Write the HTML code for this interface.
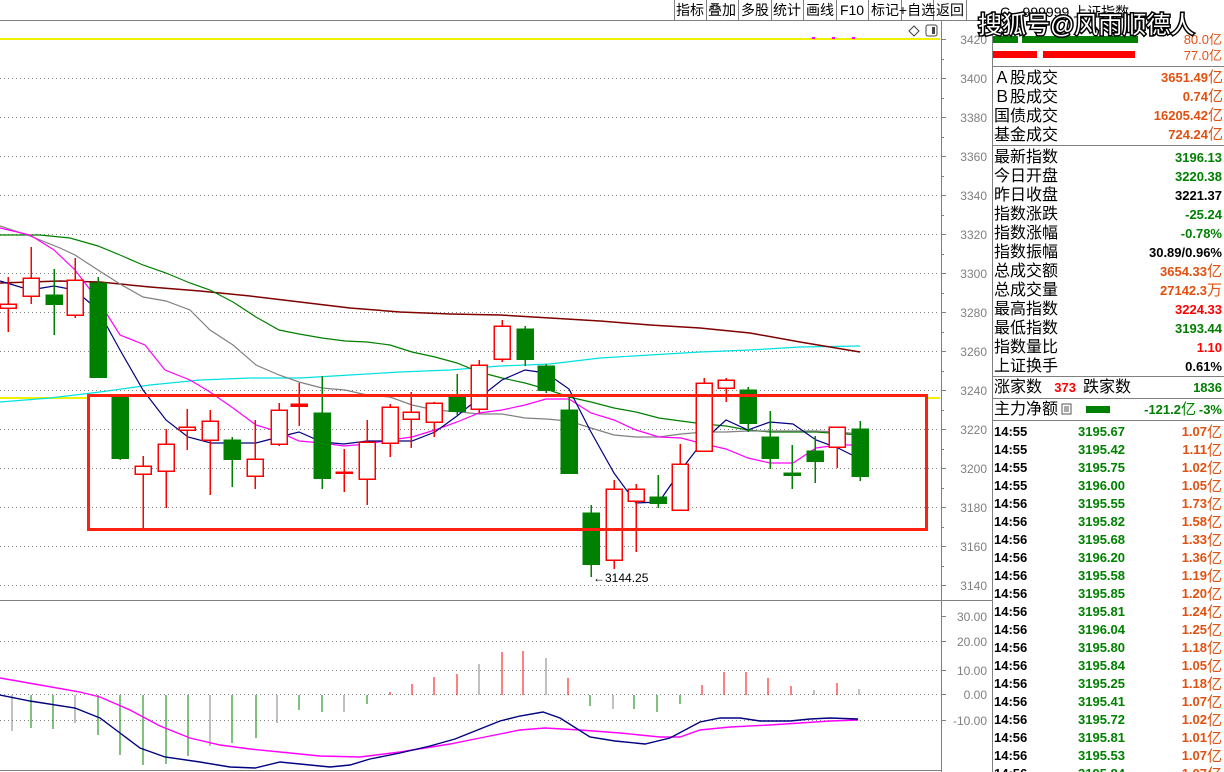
<!DOCTYPE html>
<html><head><meta charset="utf-8"><style>
body{margin:0;width:1224px;height:772px;overflow:hidden;background:#fff;font-family:"Liberation Sans","Noto Sans CJK SC",sans-serif}
svg{display:block}
.t{font-family:"Liberation Sans","Noto Sans CJK SC",sans-serif}
</style></head><body>
<svg width="1224" height="772" xmlns="http://www.w3.org/2000/svg">
<rect width="1224" height="772" fill="#fff"/>
<g stroke="#808080" fill="none" shape-rendering="crispEdges">
<line x1="0" y1="20.5" x2="992" y2="20.5"/>
<line x1="674.5" y1="0" x2="674.5" y2="20"/><line x1="706.5" y1="0" x2="706.5" y2="20"/><line x1="738.5" y1="0" x2="738.5" y2="20"/><line x1="771.5" y1="0" x2="771.5" y2="20"/><line x1="803.5" y1="0" x2="803.5" y2="20"/><line x1="836.5" y1="0" x2="836.5" y2="20"/><line x1="868.5" y1="0" x2="868.5" y2="20"/><line x1="901.5" y1="0" x2="901.5" y2="20"/><line x1="933.5" y1="0" x2="933.5" y2="20"/><line x1="966.5" y1="0" x2="966.5" y2="20"/>
</g>
<g font-size="14" fill="#000" class="t" text-anchor="middle">
<text x="690" y="15">指标</text><text x="722" y="15">叠加</text><text x="755" y="15">多股</text><text x="787" y="15">统计</text><text x="820" y="15">画线</text><text x="852" y="15">F10</text><text x="885" y="15">标记</text><text x="917" y="15">+自选</text><text x="950" y="15">返回</text>
</g>
<g stroke="#808080" stroke-dasharray="1,3" shape-rendering="crispEdges">
<line x1="0" y1="78.5" x2="940" y2="78.5"/><line x1="0" y1="117.5" x2="940" y2="117.5"/><line x1="0" y1="156.5" x2="940" y2="156.5"/><line x1="0" y1="195.5" x2="940" y2="195.5"/><line x1="0" y1="234.5" x2="940" y2="234.5"/><line x1="0" y1="273.5" x2="940" y2="273.5"/><line x1="0" y1="312.5" x2="940" y2="312.5"/><line x1="0" y1="351.5" x2="940" y2="351.5"/><line x1="0" y1="390.5" x2="940" y2="390.5"/><line x1="0" y1="429.5" x2="940" y2="429.5"/><line x1="0" y1="468.5" x2="940" y2="468.5"/><line x1="0" y1="507.5" x2="940" y2="507.5"/><line x1="0" y1="546.5" x2="940" y2="546.5"/><line x1="0" y1="585.5" x2="940" y2="585.5"/>
<line x1="0" y1="641.5" x2="940" y2="641.5"/><line x1="0" y1="670.5" x2="940" y2="670.5"/><line x1="0" y1="694.5" x2="940" y2="694.5"/><line x1="0" y1="720.5" x2="940" y2="720.5"/>
</g>
<line x1="0" y1="39" x2="940" y2="39" stroke="#f0f000" stroke-width="2"/>
<rect x="812" y="37" width="3" height="2" fill="#f0f"/><rect x="832" y="37" width="3" height="2" fill="#f0f"/><rect x="852" y="37" width="3" height="2" fill="#f0f"/>
<path d="M909 31 L914 26 L919 31 L914 36 Z" fill="none" stroke="#444"/>
<rect x="926" y="25" width="11" height="11" rx="2" fill="none" stroke="#444"/><rect x="932" y="27" width="3" height="7" fill="#444"/>
<line x1="0" y1="398" x2="87" y2="398" stroke="#f0f000" stroke-width="2"/>
<line x1="927" y1="398" x2="940" y2="398" stroke="#f0f000" stroke-width="2"/>
<g fill="none" stroke-width="1.2">
<polyline stroke="#00e0e0" points="0,402 50,398 100,392 150,385 200,380 250,378 300,378 350,375 400,372 450,370 500,366 550,364 600,358 650,355 700,352 750,350 800,347 860,346"/>
<polyline stroke="#800000" stroke-width="1.5" points="0,283 60,281 100,282 150,287 200,291 250,296 300,302 350,308 400,312 450,314 500,315 550,318 600,321 650,325 700,328 750,333 800,342 860,352"/>
<polyline stroke="#008000" points="0,235 40,235 70,238 98,246 120,255 143,265 166,273 190,283 210,290 233,302 256,317 279,330 299,334 322,338 345,341 367,342 390,345 412,352 435,357 457,363 479,372 502,378 525,383 546,389 569,397 591,402 614,408 636,412 659,418 681,421 704,424 726,426 748,430 770,432 816,432 860,435"/>
<polyline stroke="#808080" points="0,226 30,236 60,248 75,255 98,270 120,284 143,297 166,301 190,310 210,330 233,345 256,365 279,375 299,382 322,388 345,390 367,395 390,397 412,405 435,410 460,412 479,414 502,414 525,418 546,419 569,421 591,428 614,435 636,437 659,437 681,434 704,432 726,432 748,431 770,431 816,431 838,432 860,434"/>
<polyline stroke="#ff00ff" points="0,228 30,235 54,250 75,270 98,300 120,335 145,345 165,370 190,380 210,392 233,408 256,425 279,432 299,441 322,443 344,446 367,444 390,440 412,437 435,430 457,422 479,413 502,410 525,405 546,399 569,399 591,413 614,420 636,430 659,437 681,438 704,444 726,449 748,458 770,463 793,463 816,448 838,445 860,445"/>
<polyline stroke="#000080" points="0,281 30,290 54,286 75,290 98,310 120,350 143,390 166,420 188,437 211,443 234,443 256,443 279,437 299,432 322,442 344,444 367,441 390,441 412,441 435,432 457,416 479,398 502,380 525,370 546,373 569,389 591,432 614,473 636,503 659,502 681,470 704,440 726,420 748,430 770,422 793,424 816,440 838,448 860,459"/>
</g>
<g shape-rendering="crispEdges" stroke-width="1.5">
<g stroke="#ff0000" fill="#fff">
<line x1="8" y1="277" x2="8" y2="332"/><rect x="0" y="304" width="16" height="4"/>
<line x1="31" y1="247" x2="31" y2="304"/><rect x="23" y="278" width="16" height="18"/>
<line x1="75" y1="258" x2="75" y2="318"/><rect x="67" y="280" width="16" height="35"/>
<line x1="143" y1="456" x2="143" y2="530"/><rect x="135" y="466" width="16" height="8"/>
<line x1="166" y1="429" x2="166" y2="508"/><rect x="158" y="444" width="16" height="27"/>
<line x1="187" y1="409" x2="187" y2="450"/><rect x="179" y="427" width="16" height="3"/>
<line x1="210" y1="410" x2="210" y2="495"/><rect x="202" y="421" width="16" height="19"/>
<line x1="255" y1="420" x2="255" y2="489"/><rect x="247" y="459" width="16" height="17"/>
<line x1="279" y1="403" x2="279" y2="446"/><rect x="271" y="410" width="16" height="34"/>
<line x1="299" y1="383" x2="299" y2="426"/><rect x="291" y="404" width="16" height="2" fill="#f00"/>
<line x1="344" y1="449" x2="344" y2="492"/><rect x="336" y="472" width="16" height="1" fill="#f00"/>
<line x1="367" y1="420" x2="367" y2="505"/><rect x="359" y="442" width="16" height="37"/>
<line x1="390" y1="404" x2="390" y2="457"/><rect x="382" y="407" width="16" height="36"/>
<line x1="411" y1="392" x2="411" y2="448"/><rect x="403" y="412" width="16" height="7"/>
<line x1="434" y1="402" x2="434" y2="437"/><rect x="426" y="403" width="16" height="19"/>
<line x1="479" y1="360" x2="479" y2="413"/><rect x="471" y="365" width="16" height="44"/>
<line x1="502" y1="320" x2="502" y2="362"/><rect x="494" y="326" width="16" height="33"/>
<line x1="614" y1="480" x2="614" y2="569"/><rect x="606" y="489" width="16" height="71"/>
<line x1="636" y1="484" x2="636" y2="552"/><rect x="628" y="489" width="16" height="12"/>
<line x1="680" y1="444" x2="680" y2="510"/><rect x="672" y="464" width="16" height="46"/>
<line x1="704" y1="378" x2="704" y2="451"/><rect x="696" y="383" width="16" height="68"/>
<line x1="726" y1="378" x2="726" y2="402"/><rect x="718" y="380" width="16" height="8"/>
<line x1="837" y1="427" x2="837" y2="468"/><rect x="829" y="427" width="16" height="20"/>
</g>
<g stroke="#008000" fill="#008000">
<line x1="54" y1="269" x2="54" y2="335"/><rect x="46" y="295" width="16" height="9"/>
<line x1="98" y1="277" x2="98" y2="377"/><rect x="90" y="283" width="16" height="94"/>
<line x1="120" y1="397" x2="120" y2="460"/><rect x="112" y="397" width="16" height="61"/>
<line x1="232" y1="437" x2="232" y2="487"/><rect x="224" y="440" width="16" height="19"/>
<line x1="322" y1="376" x2="322" y2="489"/><rect x="314" y="413" width="16" height="65"/>
<line x1="457" y1="374" x2="457" y2="415"/><rect x="449" y="397" width="16" height="14"/>
<line x1="525" y1="326" x2="525" y2="366"/><rect x="517" y="329" width="16" height="30"/>
<line x1="546" y1="364" x2="546" y2="393"/><rect x="538" y="366" width="16" height="24"/>
<line x1="569" y1="397" x2="569" y2="473"/><rect x="561" y="410" width="16" height="63"/>
<line x1="591" y1="505" x2="591" y2="577"/><rect x="583" y="513" width="16" height="51"/>
<line x1="658" y1="475" x2="658" y2="508"/><rect x="650" y="497" width="16" height="6"/>
<line x1="748" y1="387" x2="748" y2="432"/><rect x="740" y="390" width="16" height="33"/>
<line x1="770" y1="411" x2="770" y2="469"/><rect x="762" y="437" width="16" height="21"/>
<line x1="792" y1="445" x2="792" y2="489"/><rect x="784" y="473" width="16" height="2"/>
<line x1="815" y1="436" x2="815" y2="483"/><rect x="807" y="451" width="16" height="10"/>
<line x1="860" y1="421" x2="860" y2="481"/><rect x="852" y="429" width="16" height="47"/>
</g>
</g>
<rect x="88.5" y="395.5" width="838" height="134" fill="none" stroke="#ff2010" stroke-width="3"/>
<text x="593" y="582" font-size="12" class="t" fill="#000">←3144.25</text>
<g stroke="#808080" shape-rendering="crispEdges">
<line x1="941.5" y1="20" x2="941.5" y2="772"/>
<line x1="0" y1="600.5" x2="992" y2="600.5"/>
<line x1="0" y1="770.5" x2="941" y2="770.5"/>
<line x1="992.5" y1="20" x2="992.5" y2="772"/>
</g>
<g stroke="#808080" shape-rendering="crispEdges">
<line x1="941" y1="39.5" x2="946" y2="39.5"/><line x1="941" y1="78.5" x2="946" y2="78.5"/><line x1="941" y1="117.5" x2="946" y2="117.5"/><line x1="941" y1="156.5" x2="946" y2="156.5"/><line x1="941" y1="195.5" x2="946" y2="195.5"/><line x1="941" y1="234.5" x2="946" y2="234.5"/><line x1="941" y1="273.5" x2="946" y2="273.5"/><line x1="941" y1="312.5" x2="946" y2="312.5"/><line x1="941" y1="351.5" x2="946" y2="351.5"/><line x1="941" y1="390.5" x2="946" y2="390.5"/><line x1="941" y1="429.5" x2="946" y2="429.5"/><line x1="941" y1="468.5" x2="946" y2="468.5"/><line x1="941" y1="507.5" x2="946" y2="507.5"/><line x1="941" y1="546.5" x2="946" y2="546.5"/><line x1="941" y1="585.5" x2="946" y2="585.5"/>
<line x1="941" y1="59.5" x2="944" y2="59.5"/><line x1="941" y1="98.5" x2="944" y2="98.5"/><line x1="941" y1="137.5" x2="944" y2="137.5"/><line x1="941" y1="176.5" x2="944" y2="176.5"/><line x1="941" y1="215.5" x2="944" y2="215.5"/><line x1="941" y1="254.5" x2="944" y2="254.5"/><line x1="941" y1="293.5" x2="944" y2="293.5"/><line x1="941" y1="332.5" x2="944" y2="332.5"/><line x1="941" y1="371.5" x2="944" y2="371.5"/><line x1="941" y1="410.5" x2="944" y2="410.5"/><line x1="941" y1="449.5" x2="944" y2="449.5"/><line x1="941" y1="488.5" x2="944" y2="488.5"/><line x1="941" y1="527.5" x2="944" y2="527.5"/><line x1="941" y1="566.5" x2="944" y2="566.5"/>
<line x1="941" y1="616.5" x2="946" y2="616.5"/><line x1="941" y1="641.5" x2="946" y2="641.5"/><line x1="941" y1="670.5" x2="946" y2="670.5"/><line x1="941" y1="694.5" x2="946" y2="694.5"/><line x1="941" y1="720.5" x2="946" y2="720.5"/>
</g>
<g font-size="12" fill="#808080" class="t" text-anchor="end">
<text x="987" y="44">3420</text><text x="987" y="83">3400</text><text x="987" y="122">3380</text><text x="987" y="161">3360</text><text x="987" y="200">3340</text><text x="987" y="239">3320</text><text x="987" y="278">3300</text><text x="987" y="317">3280</text><text x="987" y="356">3260</text><text x="987" y="395">3240</text><text x="987" y="434">3220</text><text x="987" y="473">3200</text><text x="987" y="512">3180</text><text x="987" y="551">3160</text><text x="987" y="590">3140</text>
<text x="987" y="621">30.00</text><text x="987" y="646">20.00</text><text x="987" y="675">10.00</text><text x="987" y="699">0.00</text><text x="987" y="725">-10.00</text>
</g>
<g stroke-width="1.3" shape-rendering="crispEdges">
<g stroke="#008000">
<line x1="31" y1="695" x2="31" y2="728"/><line x1="53" y1="695" x2="53" y2="729"/><line x1="98" y1="695" x2="98" y2="735"/><line x1="120" y1="695" x2="120" y2="755"/><line x1="143" y1="695" x2="143" y2="765"/><line x1="166" y1="695" x2="166" y2="764"/><line x1="188" y1="695" x2="188" y2="756"/><line x1="232" y1="695" x2="232" y2="743"/><line x1="256" y1="695" x2="256" y2="738"/><line x1="299" y1="695" x2="299" y2="710"/><line x1="322" y1="695" x2="322" y2="712"/><line x1="367" y1="695" x2="367" y2="704"/><line x1="590" y1="695" x2="590" y2="706"/><line x1="634" y1="695" x2="634" y2="709"/><line x1="657" y1="695" x2="657" y2="712"/><line x1="680" y1="695" x2="680" y2="704"/>
</g>
<g stroke="#808080" stroke-width="1">
<line x1="12" y1="695" x2="12" y2="731"/><line x1="75" y1="695" x2="75" y2="723"/><line x1="210" y1="695" x2="210" y2="746"/><line x1="277" y1="695" x2="277" y2="723"/><line x1="344" y1="695" x2="344" y2="712"/><line x1="479" y1="695" x2="479" y2="664"/><line x1="546" y1="695" x2="546" y2="658"/><line x1="613" y1="695" x2="613" y2="709"/><line x1="814" y1="695" x2="814" y2="690"/><line x1="859" y1="695" x2="859" y2="689"/>
</g>
<g stroke="#ff0000">
<line x1="390" y1="695" x2="390" y2="692"/><line x1="412" y1="695" x2="412" y2="684"/><line x1="434" y1="695" x2="434" y2="677"/><line x1="457" y1="695" x2="457" y2="674"/><line x1="502" y1="695" x2="502" y2="652"/><line x1="523" y1="695" x2="523" y2="651"/><line x1="568" y1="695" x2="568" y2="678"/><line x1="702" y1="695" x2="702" y2="685"/><line x1="724" y1="695" x2="724" y2="672"/><line x1="746" y1="695" x2="746" y2="672"/><line x1="768" y1="695" x2="768" y2="678"/><line x1="791" y1="695" x2="791" y2="686"/><line x1="837" y1="695" x2="837" y2="683"/>
</g>
</g>
<g fill="none" stroke-width="1.4">
<polyline stroke="#ff00ff" points="0,678 40,685 80,692 100,697 130,710 160,726 190,738 220,745 250,749 280,752 320,756 360,757 400,752 450,744 480,738 520,730 545,728 580,730 620,733 660,737 680,737 700,730 730,727 770,725 800,723 830,721 858,720"/>
<polyline stroke="#000080" points="0,695 30,701 75,708 100,718 120,733 140,748 165,757 200,762 230,767 255,768 280,762 300,764 330,767 350,765 370,759 400,753 430,746 455,739 480,729 500,721 520,716 543,712 560,718 590,737 615,741 645,744 670,738 700,722 720,718 740,718 760,721 790,721 810,719 830,718 858,719"/>
</g>
<text x="1000" y="17" font-size="14" class="t" fill="#000">C - 999999 上证指数</text>
<rect x="993" y="36" width="25" height="7" fill="#008000"/><rect x="1022" y="36" width="116" height="7" fill="#008000"/>
<rect x="993" y="51" width="44" height="7" fill="#ff0000"/><rect x="1043" y="51" width="92" height="7" fill="#ff0000"/>
<text x="1222" y="44" font-size="13" class="t" fill="#e05010" text-anchor="end">80.0亿</text>
<text x="1222" y="60" font-size="13" class="t" fill="#e05010" text-anchor="end">77.0亿</text>
<text x="978" y="33" font-size="24" class="t" fill="#fff" stroke="#000" stroke-width="3" paint-order="stroke">搜狐号@风雨顺德人</text>
<g stroke="#808080" shape-rendering="crispEdges">
<line x1="992" y1="66.5" x2="1224" y2="66.5"/><line x1="992" y1="145.5" x2="1224" y2="145.5"/><line x1="992" y1="376.5" x2="1224" y2="376.5"/><line x1="992" y1="398.5" x2="1224" y2="398.5"/><line x1="992" y1="420.5" x2="1224" y2="420.5"/>
</g>
<g font-size="16" class="t" fill="#000">
<text x="994" y="83">Ａ股成交</text><text x="994" y="102">Ｂ股成交</text><text x="994" y="121">国债成交</text><text x="994" y="140">基金成交</text>
<text x="994" y="162">最新指数</text><text x="994" y="181">今日开盘</text><text x="994" y="200">昨日收盘</text><text x="994" y="219">指数涨跌</text><text x="994" y="238">指数涨幅</text><text x="994" y="257">指数振幅</text><text x="994" y="276">总成交额</text><text x="994" y="295">总成交量</text><text x="994" y="314">最高指数</text><text x="994" y="333">最低指数</text><text x="994" y="352">指数量比</text><text x="994" y="371">上证换手</text>
<text x="994" y="392">涨家数</text><text x="1083" y="392">跌家数</text><text x="994" y="414">主力净额</text>
</g>
<rect x="1062" y="404" width="9" height="10" fill="none" stroke="#555"/><line x1="1064" y1="407" x2="1069" y2="407" stroke="#555"/><line x1="1064" y1="409" x2="1069" y2="409" stroke="#555"/><line x1="1064" y1="411" x2="1069" y2="411" stroke="#555"/>
<rect x="1086" y="406" width="24" height="7" fill="#008000"/>
<g font-size="13" font-weight="bold" class="t" text-anchor="end">
<g fill="#e05010"><text x="1208" y="82">3651.49</text><text x="1208" y="101">0.74</text><text x="1208" y="120">16205.42</text><text x="1208" y="139">724.24</text><text x="1207" y="276">3654.33</text><text x="1207" y="295">27142.3</text></g>
<g fill="#008000"><text x="1222" y="162">3196.13</text><text x="1222" y="181">3220.38</text><text x="1222" y="219">-25.24</text><text x="1222" y="238">-0.78%</text><text x="1222" y="333">3193.44</text><text x="1222" y="392">1836</text><text x="1181" y="414">-121.2</text><text x="1222" y="414">-3%</text></g>
<g fill="#000"><text x="1222" y="200">3221.37</text><text x="1222" y="257">30.89/0.96%</text><text x="1222" y="371">0.61%</text></g>
<g fill="#ff0000"><text x="1222" y="314">3224.33</text><text x="1222" y="352">1.10</text><text x="1076" y="392">373</text></g>
</g>
<g font-size="15" class="t" fill="#e05010">
<text x="1208" y="82">亿</text><text x="1208" y="101">亿</text><text x="1208" y="120">亿</text><text x="1208" y="139">亿</text><text x="1207" y="276">亿</text><text x="1207" y="295">万</text>
</g>
<text x="1181" y="414" font-size="15" class="t" fill="#008000">亿</text>
<g font-size="13" font-weight="bold" class="t">
<g fill="#000">
<text x="994" y="436">14:55</text><text x="994" y="454">14:55</text><text x="994" y="472">14:55</text><text x="994" y="490">14:55</text><text x="994" y="508">14:56</text><text x="994" y="526">14:56</text><text x="994" y="544">14:56</text><text x="994" y="562">14:56</text><text x="994" y="580">14:56</text><text x="994" y="598">14:56</text><text x="994" y="616">14:56</text><text x="994" y="634">14:56</text><text x="994" y="652">14:56</text><text x="994" y="670">14:56</text><text x="994" y="688">14:56</text><text x="994" y="706">14:56</text><text x="994" y="724">14:56</text><text x="994" y="742">14:56</text><text x="994" y="760">14:56</text><text x="994" y="778">14:56</text>
</g>
<g fill="#008000" text-anchor="end">
<text x="1125" y="436">3195.67</text><text x="1125" y="454">3195.42</text><text x="1125" y="472">3195.75</text><text x="1125" y="490">3196.00</text><text x="1125" y="508">3195.55</text><text x="1125" y="526">3195.82</text><text x="1125" y="544">3195.68</text><text x="1125" y="562">3196.20</text><text x="1125" y="580">3195.58</text><text x="1125" y="598">3195.85</text><text x="1125" y="616">3195.81</text><text x="1125" y="634">3196.04</text><text x="1125" y="652">3195.80</text><text x="1125" y="670">3195.84</text><text x="1125" y="688">3195.25</text><text x="1125" y="706">3195.41</text><text x="1125" y="724">3195.72</text><text x="1125" y="742">3195.81</text><text x="1125" y="760">3195.53</text><text x="1125" y="778">3195.84</text>
</g>
<g fill="#e05010" text-anchor="end">
<text x="1207" y="436">1.07</text><text x="1207" y="454">1.11</text><text x="1207" y="472">1.02</text><text x="1207" y="490">1.05</text><text x="1207" y="508">1.73</text><text x="1207" y="526">1.58</text><text x="1207" y="544">1.33</text><text x="1207" y="562">1.36</text><text x="1207" y="580">1.19</text><text x="1207" y="598">1.20</text><text x="1207" y="616">1.24</text><text x="1207" y="634">1.25</text><text x="1207" y="652">1.18</text><text x="1207" y="670">1.05</text><text x="1207" y="688">1.18</text><text x="1207" y="706">1.07</text><text x="1207" y="724">1.02</text><text x="1207" y="742">1.01</text><text x="1207" y="760">1.07</text><text x="1207" y="778">1.07</text>
</g>
</g>
<g font-size="15" class="t" fill="#e05010">
<text x="1207" y="437">亿</text><text x="1207" y="455">亿</text><text x="1207" y="473">亿</text><text x="1207" y="491">亿</text><text x="1207" y="509">亿</text><text x="1207" y="527">亿</text><text x="1207" y="545">亿</text><text x="1207" y="563">亿</text><text x="1207" y="581">亿</text><text x="1207" y="599">亿</text><text x="1207" y="617">亿</text><text x="1207" y="635">亿</text><text x="1207" y="653">亿</text><text x="1207" y="671">亿</text><text x="1207" y="689">亿</text><text x="1207" y="707">亿</text><text x="1207" y="725">亿</text><text x="1207" y="743">亿</text><text x="1207" y="761">亿</text><text x="1207" y="779">亿</text>
</g>
</svg>
</body></html>
